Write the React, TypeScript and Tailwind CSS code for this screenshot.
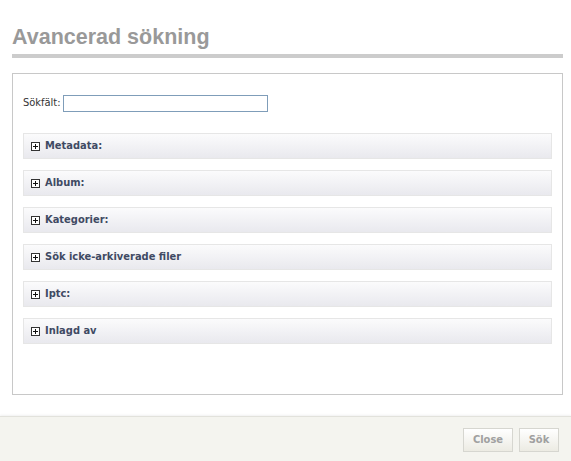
import React from "react";

const sections = [
  "Metadata:",
  "Album:",
  "Kategorier:",
  "Sök icke-arkiverade filer",
  "Iptc:",
  "Inlagd av",
];

function PlusBox() {
  return (
    <svg width="9" height="9" viewBox="0 0 9 9" className="shrink-0">
      <rect x="0.5" y="0.5" width="8" height="8" fill="#fff" stroke="#333" />
      <path d="M2 4.5h5M4.5 2v5" stroke="#111" strokeWidth="1" />
    </svg>
  );
}

export default function App() {
  return (
    <div
      className="w-[571px] h-[461px] bg-white flex flex-col"
      style={{ fontFamily: "Tahoma, 'DejaVu Sans Condensed', 'Liberation Sans', sans-serif" }}
    >
      <div className="px-3 pt-[24px]">
        <h1 className="text-[21.5px] leading-[26px] font-bold text-[#999]" style={{ fontFamily: "'Liberation Sans', Arial, sans-serif" }}>
          Avancerad sökning
        </h1>
        <div className="mt-[4px] h-[4px] w-[551px] bg-[#ccc]" />
      </div>

      <div className="mx-3 mt-[15px] h-[322px] w-[551px] border border-[#c8c8c8] px-[10px] pt-[21px]">
        <div className="flex items-center gap-[2px] text-[11px] text-[#333]">
          <span>Sökfält:</span>
          <input className="h-[17px] w-[205px] border border-[#7f9db9] bg-white outline-none" />
        </div>

        <div className="mt-[21px] flex flex-col gap-[11px]">
          {sections.map((s) => (
            <div
              key={s}
              className="flex h-[26px] w-[529px] items-center gap-[5px] border border-[#e6e6e6] bg-gradient-to-b from-[#fbfbfc] to-[#e9e9ee] pl-[7px]"
            >
              <PlusBox />
              <span className="text-[11px] font-bold text-[#3f4a63]">{s}</span>
            </div>
          ))}
        </div>
      </div>

      <div className="mt-auto h-[45px] border-t border-[#e2e2dc] bg-[#f4f4ef] shadow-[0_-1px_2px_rgba(0,0,0,0.06)] flex items-center justify-end gap-[6px] pr-[12px] pt-[2px]">
        <button className="h-[24px] w-[50px] border border-[#d6d6d0] bg-gradient-to-b from-white to-[#ecebe3] text-[11px] font-bold text-[#a0a0a0]">
          Close
        </button>
        <button className="h-[24px] w-[40px] border border-[#d6d6d0] bg-gradient-to-b from-white to-[#ecebe3] text-[11px] font-bold text-[#a0a0a0]">
          Sök
        </button>
      </div>
    </div>
  );
}
